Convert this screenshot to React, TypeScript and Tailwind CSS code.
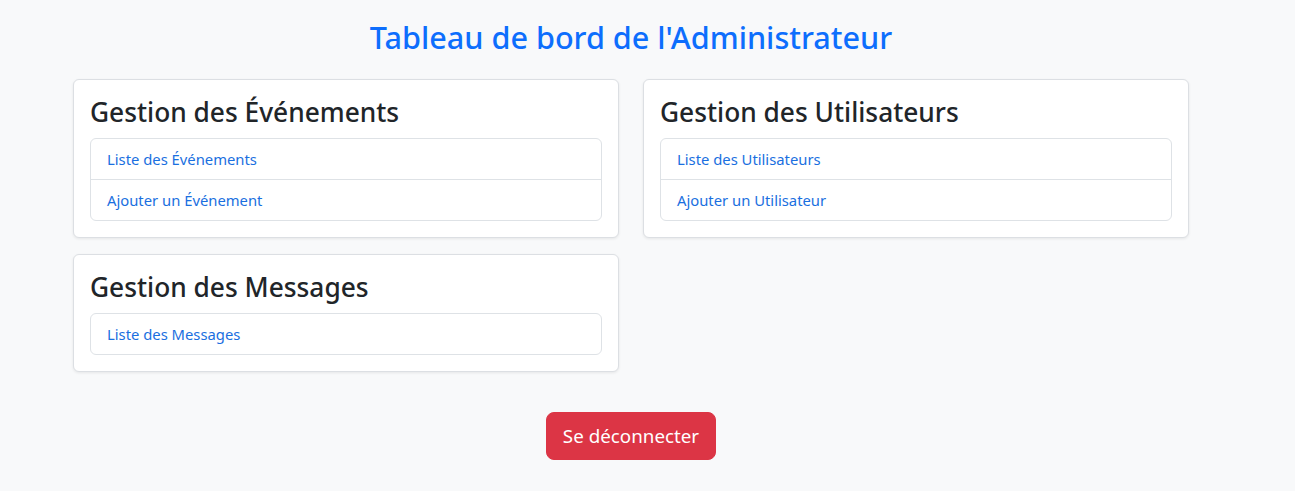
const sections = [
  {
    title: "Gestion des Événements",
    links: ["Liste des Événements", "Ajouter un Événement"],
  },
  {
    title: "Gestion des Utilisateurs",
    links: ["Liste des Utilisateurs", "Ajouter un Utilisateur"],
  },
  {
    title: "Gestion des Messages",
    links: ["Liste des Messages"],
  },
];

function SectionCard({ title, links }: { title: string; links: string[] }) {
  return (
    <div className="self-start rounded-[6px] border border-[#dcdfe3] bg-white p-4 shadow-[0_1px_3px_rgba(0,0,0,0.08)]">
      <h3 className="mb-2 text-[26.3px] font-medium leading-[33.6px] text-[#212529]">
        {title}
      </h3>
      <ul className="overflow-hidden rounded-[6px] border border-[#dee2e6]">
        {links.map((link, i) => (
          <li
            key={link}
            className={`px-4 py-2 text-[14.8px] leading-6 text-[#1a6fe0] ${
              i > 0 ? "border-t border-[#dee2e6]" : ""
            }`}
          >
            <a href="#">{link}</a>
          </li>
        ))}
      </ul>
    </div>
  );
}

export default function App() {
  return (
    <div
      className="min-h-[491px] w-full bg-[#f8f9fa] pt-[18px]"
      style={{ fontFamily: '"Noto Sans", "Open Sans", sans-serif' }}
    >
      <div className="w-[1262px]">
        <div className="mx-auto w-[1116px]">
          <h2 className="mb-[23px] text-center text-[30.6px] font-medium leading-[38.4px] text-[#0d6efd]">
            Tableau de bord de l'Administrateur
          </h2>
          <div className="grid grid-cols-2 gap-x-6 gap-y-4">
            {sections.map((s) => (
              <SectionCard key={s.title} title={s.title} links={s.links} />
            ))}
          </div>
          <div className="mt-10 flex justify-center">
            <button
              type="button"
              className="rounded-lg border border-[#dc3545] bg-[#dc3545] px-4 py-2 text-[18.8px] leading-[30px] text-white"
            >
              Se déconnecter
            </button>
          </div>
        </div>
      </div>
    </div>
  );
}
